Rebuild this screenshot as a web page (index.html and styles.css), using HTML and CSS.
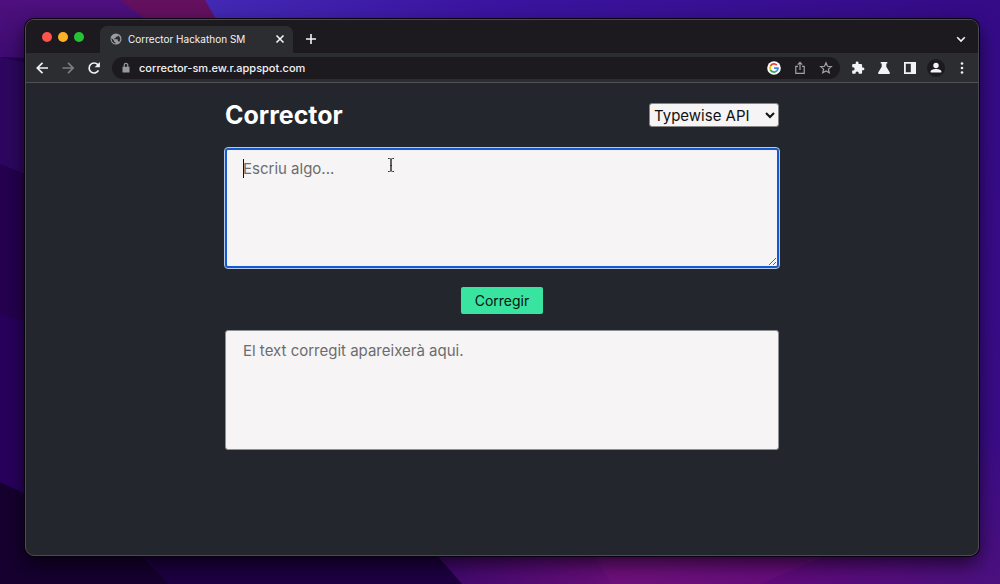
FILE: index.html
```html
<!DOCTYPE html>
<html lang="ca">
<head>
<meta charset="utf-8">
<meta name="viewport" content="width=device-width, initial-scale=1">
<title>Corrector Hackathon SM</title>
<link rel="stylesheet" href="styles.css">
</head>
<body>
<svg class="wallpaper" viewBox="0 0 1000 584" preserveAspectRatio="none" aria-hidden="true">
  <defs>
    <linearGradient id="top" x1="0" x2="1" y1="0" y2="0">
      <stop offset="0" stop-color="#4329b4"/><stop offset=".35" stop-color="#3b14a0"/><stop offset="1" stop-color="#340b84"/>
    </linearGradient>
    <linearGradient id="left" x1="0" x2="0" y1="0" y2="1">
      <stop offset="0" stop-color="#4e107e"/><stop offset="1" stop-color="#3b0b70"/>
    </linearGradient>
    <linearGradient id="right" x1="0" x2="0" y1="0" y2="1">
      <stop offset="0" stop-color="#350b88"/><stop offset=".75" stop-color="#3a0c88"/><stop offset="1" stop-color="#4c107e"/>
    </linearGradient>
    <linearGradient id="glow" x1="0" x2="1" y1="0" y2="0">
      <stop offset="0" stop-color="#3d086c"/><stop offset=".35" stop-color="#6b0e7c"/><stop offset=".65" stop-color="#5f0a7c"/><stop offset="1" stop-color="#4c107e"/>
    </linearGradient>
  </defs>
  <path fill="#25004f" d="M0 0H1000V584H0z"/>
  <path fill="url(#left)" d="M0 0H240V65L0 57z"/>
  <path fill="#2d075f" d="M0 57L40 66V180L0 164z"/>
  <path fill="#63105f" d="M120 0H215L250 60H200z"/>
  <path fill="url(#top)" d="M205 0H1000V60H240z"/>
  <path fill="url(#right)" d="M940 0H1000V584H940z"/>
  <path fill="#28005c" d="M0 315L40 325V500L0 482z"/>
  <path fill="#16002f" d="M0 482L130 545L170 584H0z"/>
  <path fill="#1d0042" d="M130 540H440L470 584H168z"/>
  <path fill="url(#glow)" d="M428 545H980V584H462z"/>
  <path fill="#7a1680" fill-opacity=".3" d="M588 545H850L760 584H611z"/>
</svg>

<div class="window">
  <div class="tabstrip">
    <div class="lights">
      <button class="light close" aria-label="Close window"></button>
      <button class="light minimise" aria-label="Minimise window"></button>
      <button class="light zoom" aria-label="Zoom window"></button>
    </div>
    <div class="tab">
      <svg class="favicon" viewBox="0 0 24 24" aria-hidden="true"><circle cx="12" cy="12" r="11" fill="#9a9da1"/><path fill="#2c2d31" d="M10.8 20.9C6.300 20.300 3 16.500 3 12c0-.6.1-1.200.2-1.800L8 15v1c0 1.100.9 2 2 2h.8zM18.400 17.900c-.3-.8-1-1.400-1.900-1.400h-1v-3c0-.6-.4-1-1-1H8.600v-2h2c.6 0 1-.4 1-1v-2h2c1.100 0 2-.9 2-2v-.4c3 1.200 5 4 5 7.100 0 2.200-1 4.200-2.200 5.700z"/></svg>
      <span class="tab-title">Corrector Hackathon SM</span>
      <button class="tab-close" aria-label="Close tab"><svg viewBox="0 0 10 10"><path d="M1.500 1.500l7 7M8.500 1.500l-7 7"/></svg></button>
    </div>
    <button class="new-tab" aria-label="New tab"><svg viewBox="0 0 12 12"><path d="M6 1v10M1 6h10"/></svg></button>
    <button class="tab-search" aria-label="Search tabs"><svg viewBox="0 0 12 12"><path d="M2.200 4.200L6 8l3.800-3.800"/></svg></button>
  </div>

  <div class="toolbar">
    <nav class="actions">
      <button class="action" aria-label="Back"><svg class="line" viewBox="0 0 14 14"><path d="M13 7H2.500M7.500 1.800L2.300 7l5.200 5.200"/></svg></button>
      <button class="action dim" aria-label="Forward"><svg class="line" viewBox="0 0 14 14"><path d="M1.500 7H12M7 1.800L12.200 7 7 12.200"/></svg></button>
      <button class="action" aria-label="Reload"><svg class="line" viewBox="0 0 14 14"><path d="M11.500 9.400A5 5 0 1 1 10.800 3.600L12 4.800"/><path fill="currentColor" stroke="none" d="M12.900 1v5.300H7.600z"/></svg></button>
    </nav>
    <div class="omnibox">
      <svg class="lock" viewBox="0 0 12 12" aria-hidden="true"><path fill="#96999d" d="M2.500 4.700h7v5.800h-7z"/><path fill="none" stroke="#96999d" stroke-width="1.200" d="M4.200 5V3.200a1.800 1.800 0 0 1 3.600 0V5"/></svg>
      <input class="address" type="text" aria-label="Address" value="corrector-sm.ew.r.appspot.com">
      <button class="action" aria-label="Google"><svg viewBox="0 0 14 14"><circle cx="7" cy="7" r="6.800" fill="#fff"/><g fill="none" stroke-width="1.800"><path stroke="#ea4335" d="M3.500 5A4 4 0 0 1 9.900 4.200"/><path stroke="#fbbc05" d="M3.500 9A4 4 0 0 1 3.500 5"/><path stroke="#34a853" d="M9.700 9.950A4 4 0 0 1 3.500 9"/><path stroke="#4285f4" d="M7 7.100h4A4 4 0 0 1 9.700 9.950"/></g></svg></button>
      <button class="action soft" aria-label="Share"><svg class="thin" viewBox="0 0 14 14"><path d="M5 5.300H2.800v7h8.400v-7H9M7 9V1.500M4.800 3.600L7 1.400l2.200 2.200"/></svg></button>
      <button class="action soft" aria-label="Bookmark"><svg class="thin" viewBox="0 0 14 14"><path d="M7 1.800l1.500 3.500 3.800.3-2.900 2.500.9 3.700L7 9.900l-3.300 1.900.9-3.700-2.900-2.500 3.800-.3z"/></svg></button>
    </div>
    <div class="actions">
      <button class="action" aria-label="Extensions"><svg viewBox="0 0 24 24"><path fill="currentColor" d="M20.500 11H19V7c0-1.100-.9-2-2-2h-4V3.500a2.500 2.500 0 0 0-5 0V5H4c-1.100 0-2 .9-2 2v3.800h1.500a2.700 2.700 0 0 1 0 5.400H2V20c0 1.100.9 2 2 2h3.800v-1.500a2.700 2.700 0 0 1 5.400 0V22H17c1.100 0 2-.9 2-2v-4h1.500a2.500 2.500 0 0 0 0-5z"/></svg></button>
      <button class="action" aria-label="Experiments"><svg viewBox="0 0 14 14"><path fill="currentColor" d="M3.700 1h6.600v1.500h-1v3.300l3.500 5.600q.6 1.600-1 1.600H2.200q-1.600 0-1-1.600l3.500-5.600V2.500h-1z"/></svg></button>
      <button class="action" aria-label="Side panel"><svg viewBox="0 0 14 14"><path fill="currentColor" fill-rule="evenodd" d="M1 1h12v12H1zM2.800 2.800v8.400h5V2.800z"/></svg></button>
      <button class="action" aria-label="Profile"><svg class="avatar" viewBox="0 0 18 18"><circle cx="9" cy="9" r="9" fill="#1c1a1e"/><circle cx="9" cy="6.500" r="2.700" fill="#f1f3f4"/><path fill="#f1f3f4" d="M3.700 13.500v-1.200C3.700 10.600 7 9.900 9 9.900s5.300.7 5.300 2.400v1.200z"/></svg></button>
      <button class="action" aria-label="Menu"><svg viewBox="0 0 14 14"><g fill="currentColor"><circle cx="7" cy="2.500" r="1.300"/><circle cx="7" cy="7" r="1.300"/><circle cx="7" cy="11.500" r="1.300"/></g></svg></button>
    </div>
  </div>

  <main class="page">
    <form class="corrector" onsubmit="return false">
      <header class="heading">
        <h1>Corrector</h1>
        <select class="engine" aria-label="API"><option>Typewise API</option></select>
      </header>
      <div class="entry">
        <textarea class="field focused" aria-label="Text" placeholder="Escriu algo..."></textarea>
        <span class="caret"></span>
        <svg class="pointer" viewBox="0 0 8 16" aria-hidden="true"><path d="M1 1.500h1.500q1.500 0 1.500 1.500v10q0 1.500-1.500 1.500H1M7 1.500H5.500Q4 1.500 4 3v10q0 1.500 1.500 1.500H7M3 8.500h2"/></svg>
      </div>
      <button class="submit" type="submit">Corregir</button>
      <textarea class="field result" aria-label="Text corregit" placeholder="El text corregit apareixerà aqui." readonly></textarea>
    </form>
  </main>
</div>
</body>
</html>
```
FILE: styles.css
```css
* { box-sizing: border-box; }

body {
  margin: 0;
  min-height: 100vh;
  padding: 19px 21px 28px 25px;
  display: flex;
  position: relative;
  background: #25004f;
  font-family: Inter, "Liberation Sans", sans-serif;
}

button, input, select, textarea { font: inherit; }

button {
  margin: 0;
  padding: 0;
  border: 0;
  background: none;
  color: inherit;
}

svg { display: block; }

.wallpaper {
  position: absolute;
  inset: 0;
  width: 100%;
  height: 100%;
}

.window {
  position: relative;
  flex: 1;
  min-width: 0;
  display: flex;
  flex-direction: column;
  border: 1px solid #4b4b50;
  border-radius: 9px;
  overflow: hidden;
  background: #23262d;
  box-shadow: 0 0 0 1px #08000f, 0 8px 20px rgba(0, 0, 0, .65);
}

/* Tab strip */
.tabstrip {
  height: 33px;
  display: flex;
  align-items: flex-end;
  background: #1c1a1e;
  color: #f1f3f4;
}

.lights {
  align-self: center;
  display: flex;
  gap: 6px;
  padding: 0 16px;
}

.light { width: 10px; height: 10px; border-radius: 50%; }
.close { background: #fd544d; }
.minimise { background: #fdb225; }
.zoom { background: #26c236; }

.tab {
  width: 193px;
  height: 27px;
  padding: 0 8px 2px 10px;
  display: flex;
  align-items: center;
  gap: 6px;
  border-radius: 7px 7px 0 0;
  background: #2c2d31;
  font-size: 10px;
}

.favicon { width: 12px; height: 12px; }
.tab-title { flex: 1; white-space: nowrap; }
.tab-close svg { width: 10px; height: 10px; }
.new-tab { height: 27px; padding: 0 12px 2px; }
.new-tab svg { width: 12px; height: 12px; }
.tab-search { height: 27px; margin-left: auto; padding: 0 11px 2px; }
.tab-search svg { width: 12px; height: 12px; }

.tabstrip button path {
  fill: none;
  stroke: currentColor;
  stroke-width: 1.6;
}

/* Toolbar */
.toolbar {
  height: 30px;
  padding: 0 3px;
  display: flex;
  align-items: center;
  gap: 5px;
  border-bottom: 1px solid #505155;
  background: #2c2d31;
  color: #f1f3f4;
}

.actions { display: flex; }

.action {
  width: 26px;
  height: 22px;
  display: grid;
  place-items: center;
  flex: none;
}

.action svg { width: 14px; height: 14px; }
.action .avatar { width: 18px; height: 18px; }
.dim { color: #7b7d81; }
.soft { color: #a0a2a6; }
.line { fill: none; stroke: currentColor; stroke-width: 1.7; }
.thin { fill: none; stroke: currentColor; stroke-width: 1.2; }

.omnibox {
  flex: 1;
  min-width: 0;
  height: 22px;
  padding: 0 1px 0 8px;
  display: flex;
  align-items: center;
  border-radius: 11px;
  background: #1c1a1e;
}

.lock { width: 12px; height: 12px; margin-right: 7px; }

.address {
  flex: 1;
  min-width: 0;
  padding: 0;
  border: 0;
  outline: 0;
  background: none;
  color: #f1f3f4;
  font-size: 11px;
  font-weight: 500;
}

/* Page */
.page {
  flex: 1;
  padding: 20px 16px;
}

.corrector {
  max-width: 554px;
  margin: 0 auto;
  display: flex;
  flex-direction: column;
  font-size: 15px;
}

.heading {
  height: 24px;
  margin-bottom: 21px;
  display: flex;
  align-items: center;
  justify-content: space-between;
}

h1 {
  margin: 0;
  color: #fff;
  font-size: 25px;
  font-weight: 700;
}

.engine {
  width: 130px;
  height: 24px;
  padding: 0;
  border: 1px solid #858585;
  border-radius: 3px;
  background: #f6f4f5;
  color: #111;
}

.entry { position: relative; }

.field {
  display: block;
  width: 100%;
  height: 120px;
  padding: 10px 17px;
  border: 1px solid #8d8f90;
  border-radius: 3px;
  background: #f6f4f5;
  color: #111;
  line-height: 20px;
}

.field::placeholder { color: #6c6c6e; opacity: 1; }

.focused {
  border: 2px solid #1658d0;
  padding: 9px 16px;
  outline: 1px solid #b7c9e8;
}

.result { resize: none; }

.caret {
  position: absolute;
  left: 18px;
  top: 11px;
  width: 1px;
  height: 19px;
  background: #111;
}

.pointer {
  position: absolute;
  left: 162px;
  top: 9px;
  width: 8px;
  height: 16px;
  fill: none;
  stroke: #333;
}

.submit {
  align-self: center;
  margin: 19px 0 16px;
  padding: 0 14px;
  border-radius: 2px;
  background: #38e4a0;
  color: #07130e;
  font-size: 14px;
  line-height: 27px;
}
```
